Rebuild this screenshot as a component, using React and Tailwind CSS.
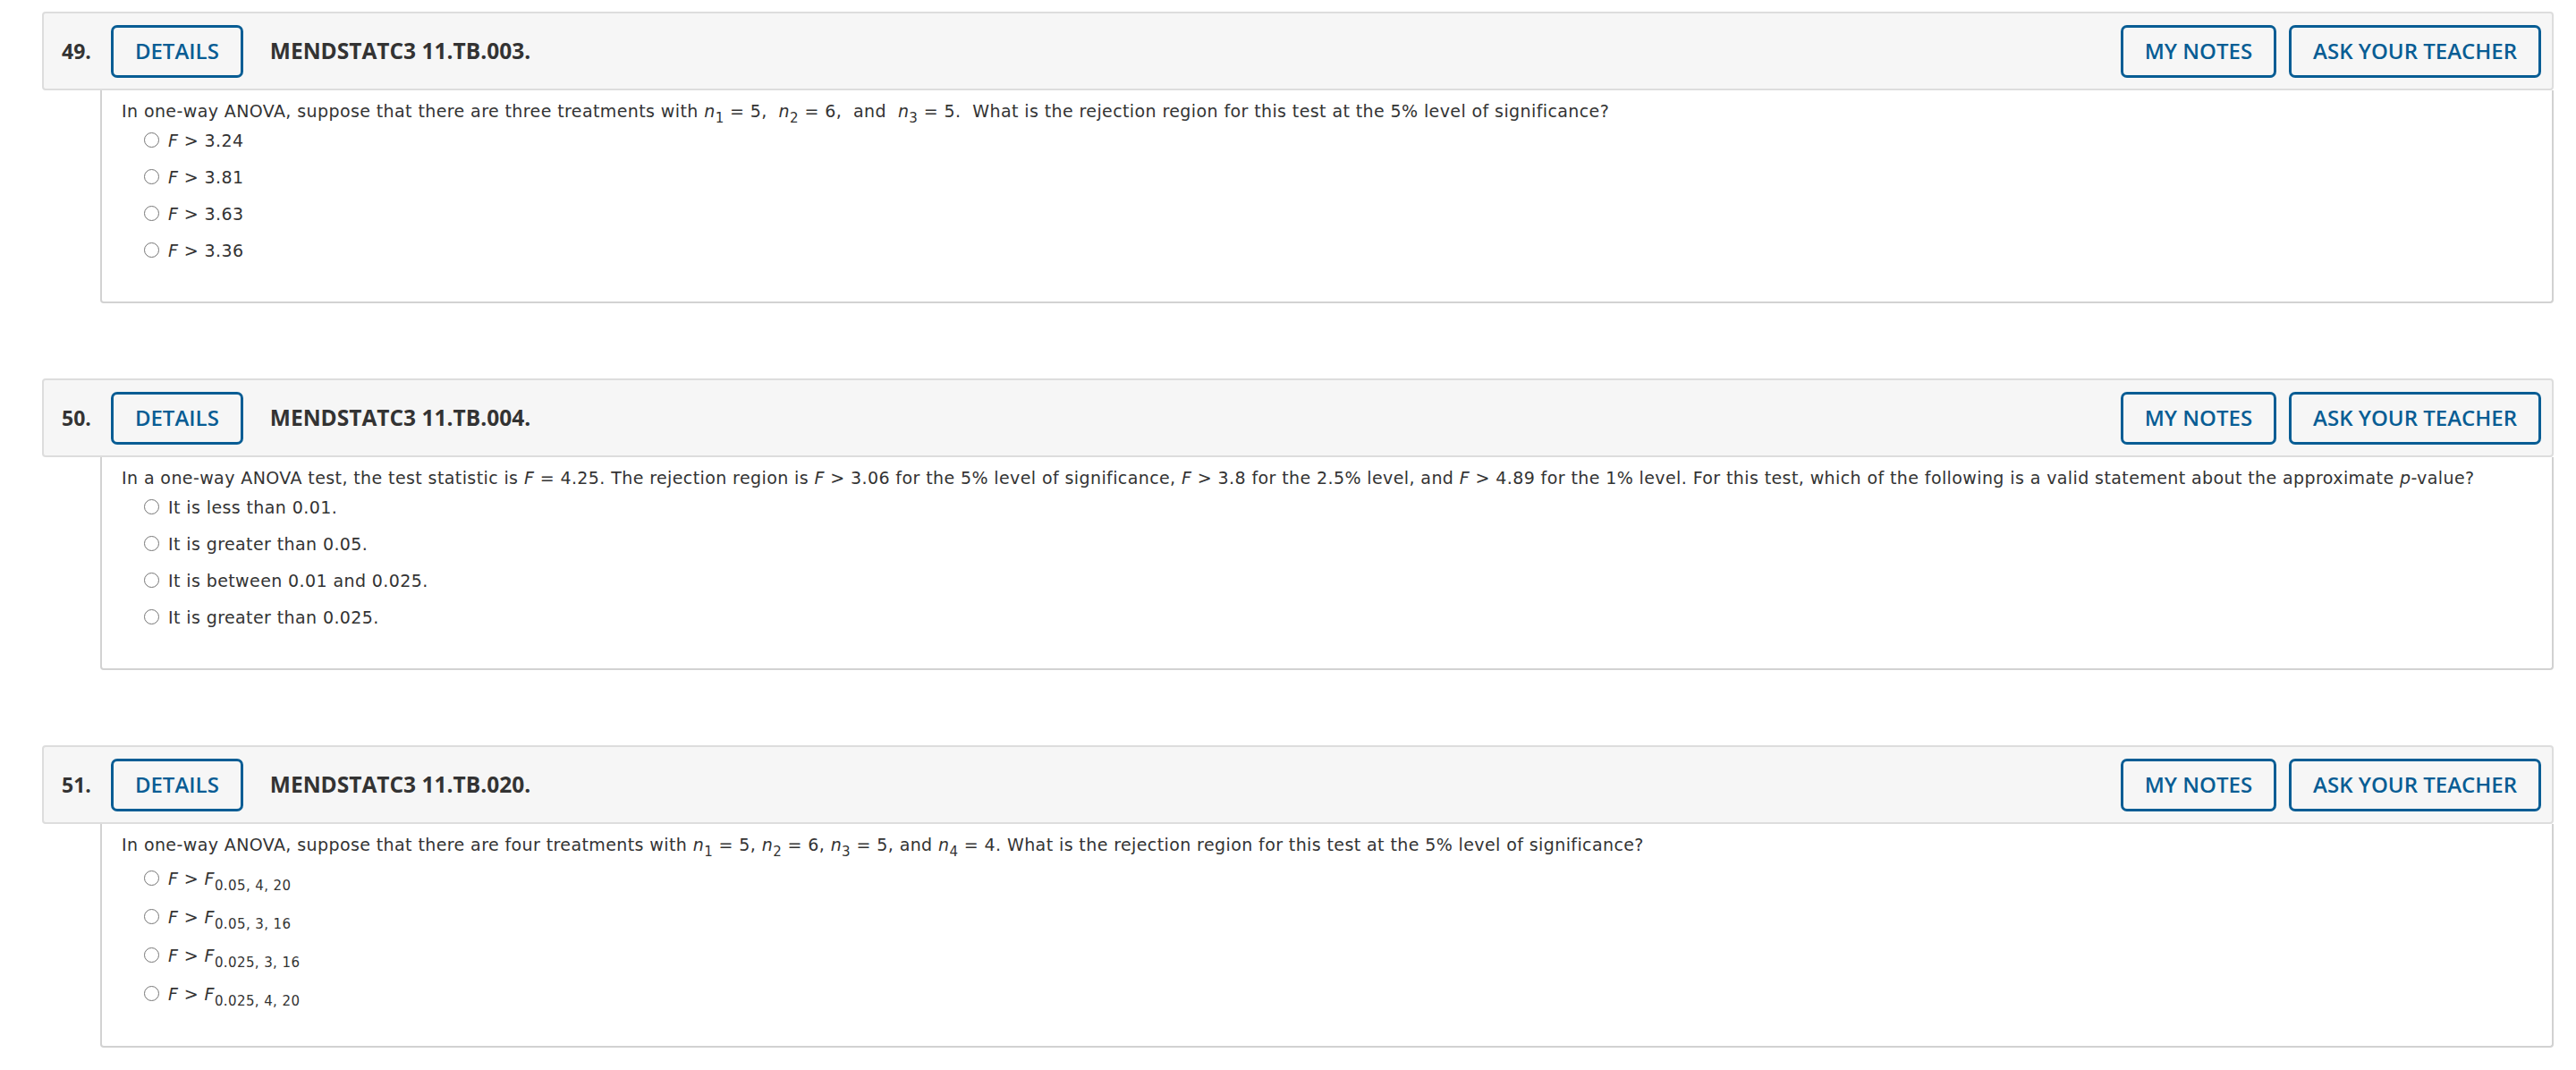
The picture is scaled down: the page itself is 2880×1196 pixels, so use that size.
import React from 'react';

const body = { fontFamily: '"DejaVu Sans", Verdana, sans-serif' };
const head = { fontFamily: '"Open Sans", "Liberation Sans", sans-serif' };

const I = ({ children }) => <i className="italic">{children}</i>;
const Sub = ({ children }) => (
  <sub className="text-[15px] bottom-[-6px] not-italic">{children}</sub>
);

const Radio = () => (
  <span className="inline-block w-[17px] h-[17px] rounded-full border-[1.5px] border-[#767676] bg-white shrink-0" />
);

const OutlineButton = ({ children }) => (
  <button
    className="h-[59px] px-[24px] border-[3px] border-[#085d94] rounded-[7px] text-[24px] font-semibold text-[#085d94] bg-transparent leading-none"
    style={head}
  >
    {children}
  </button>
);

const Question = ({ num, code, prompt, options, rowH, gapTop, last }) => (
  <section className={last ? '' : 'mb-[84px]'}>
    <div className="flex items-center h-[88px] border-2 border-[#dddddd] rounded-[4px] bg-[#f6f6f6] pl-[20px] pr-[12px]">
      <span className="text-[23px] font-bold text-[#333]" style={head}>
        {num}.
      </span>
      <div className="ml-[22px]">
        <OutlineButton>DETAILS</OutlineButton>
      </div>
      <span className="ml-[30px] text-[24.5px] font-bold text-[#333]" style={head}>
        {code}
      </span>
      <div className="ml-auto flex gap-[14px]">
        <OutlineButton>MY NOTES</OutlineButton>
        <OutlineButton>ASK YOUR TEACHER</OutlineButton>
      </div>
    </div>
    <div
      className="ml-[65px] border-2 border-t-0 border-[#d2d2d2] rounded-b-[4px] pl-[22px] pt-[11px] pb-[37px] text-[19px] tracking-[0.4px] text-[#333]"
      style={body}
    >
      <p className="leading-[24px]">{prompt}</p>
      <div className={gapTop}>
        {options.map((o, i) => (
          <div key={i} className={`flex items-center gap-[10px] pl-[25px] ${rowH}`}>
            <Radio />
            <span className="leading-[24px]">{o}</span>
          </div>
        ))}
      </div>
    </div>
  </section>
);

const sp = '\u00a0\u00a0';

export default function App() {
  return (
    <div className="min-h-screen bg-white pt-[13px] pl-[47px] pr-[25px]">
      <Question
        num="49"
        code="MENDSTATC3 11.TB.003."
        rowH="h-[41px]"
        gapTop=""
        prompt={
          <>
            In one-way ANOVA, suppose that there are three treatments with <I>n</I>
            <Sub>1</Sub> = 5,{sp}<I>n</I>
            <Sub>2</Sub> = 6,{sp}and{sp}<I>n</I>
            <Sub>3</Sub> = 5.{sp}What is the rejection region for this test at the 5% level of
            significance?
          </>
        }
        options={[
          <><I>F</I> &gt; 3.24</>,
          <><I>F</I> &gt; 3.81</>,
          <><I>F</I> &gt; 3.63</>,
          <><I>F</I> &gt; 3.36</>,
        ]}
      />
      <Question
        num="50"
        code="MENDSTATC3 11.TB.004."
        rowH="h-[41px]"
        gapTop=""
        prompt={
          <>
            In a one-way ANOVA test, the test statistic is <I>F</I> = 4.25. The rejection region is{' '}
            <I>F</I> &gt; 3.06 for the 5% level of significance, <I>F</I> &gt; 3.8 for the 2.5%
            level, and <I>F</I> &gt; 4.89 for the 1% level. For this test, which of the following is
            a valid statement about the approximate <I>p</I>-value?
          </>
        }
        options={[
          'It is less than 0.01.',
          'It is greater than 0.05.',
          'It is between 0.01 and 0.025.',
          'It is greater than 0.025.',
        ]}
      />
      <Question
        num="51"
        code="MENDSTATC3 11.TB.020."
        rowH="h-[43px]"
        gapTop="mt-[4px]"
        last
        prompt={
          <>
            In one-way ANOVA, suppose that there are four treatments with <I>n</I>
            <Sub>1</Sub> = 5, <I>n</I>
            <Sub>2</Sub> = 6, <I>n</I>
            <Sub>3</Sub> = 5, and <I>n</I>
            <Sub>4</Sub> = 4. What is the rejection region for this test at the 5% level of
            significance?
          </>
        }
        options={[
          <><I>F</I> &gt; <I>F</I><Sub>0.05, 4, 20</Sub></>,
          <><I>F</I> &gt; <I>F</I><Sub>0.05, 3, 16</Sub></>,
          <><I>F</I> &gt; <I>F</I><Sub>0.025, 3, 16</Sub></>,
          <><I>F</I> &gt; <I>F</I><Sub>0.025, 4, 20</Sub></>,
        ]}
      />
    </div>
  );
}
